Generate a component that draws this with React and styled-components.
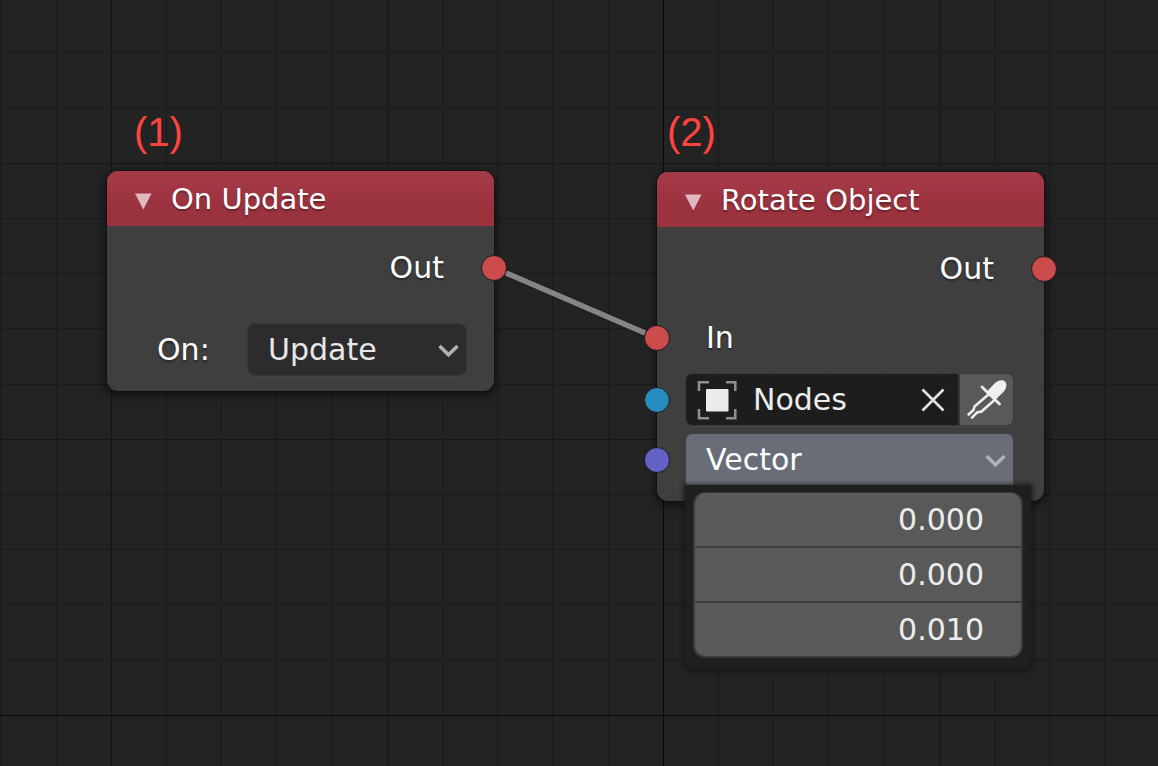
import React from "react";
import styled, { createGlobalStyle } from "styled-components";

const GlobalStyle = createGlobalStyle`
  *, *::before, *::after { box-sizing: border-box; }
  body {
    margin: 0;
    background: #232323;
    font-family: "DejaVu Sans", sans-serif;
  }
  button, input, select {
    margin: 0;
    padding: 0;
    border: 0;
    border-radius: 0;
    background: none;
    color: inherit;
    font: inherit;
    outline: none;
  }
`;

const gridStops = (major, minor) =>
  `${major} 0 1px, transparent 1px 55px, ${minor} 55px 56px, transparent 56px 110px, ${minor} 110px 111px, transparent 111px 165px, ${minor} 165px 166px, transparent 166px 221px, ${minor} 221px 222px, transparent 222px`;

const Canvas = styled.main`
  position: relative;
  min-height: 100vh;
  overflow: hidden;
  color: #ffffff;
  font-size: 30px;
  line-height: 36px;
  background-color: #232323;
  background-image:
    linear-gradient(90deg, #0a0a0a 1px, transparent 1px),
    linear-gradient(180deg, #0a0a0a 1px, transparent 1px),
    linear-gradient(90deg, ${gridStops("#151515", "#1a1a1a")}),
    linear-gradient(180deg, ${gridStops("#151515", "#1a1a1a")});
  background-size: 1380px 1380px, 1380px 1380px, 276px 276px, 276px 276px;
  background-position: 663px 715px, 663px 715px, 111px 163px, 111px 163px;
`;

const Annotation = styled.span`
  position: absolute;
  left: ${(p) => p.$x}px;
  top: ${(p) => p.$y}px;
  color: #ff4440;
  font-family: "Liberation Sans", sans-serif;
  font-size: 40px;
  line-height: 46px;
`;

const Links = styled.svg`
  position: absolute;
  inset: 0;
  width: 100%;
  height: 100%;
  pointer-events: none;
`;

const Node = styled.section`
  position: absolute;
  left: ${(p) => p.$x}px;
  top: ${(p) => p.$y}px;
  width: 387px;
  padding-bottom: 16px;
  border-radius: 11px;
  background: rgba(64, 64, 64, 0.97);
  box-shadow: 0 0 0 1px rgba(12, 12, 12, 0.5), 0 3px 9px 2px rgba(0, 0, 0, 0.5);
`;

const NodeHeader = styled.header`
  display: flex;
  align-items: center;
  gap: 19px;
  height: 55px;
  padding-left: 28px;
  border-radius: 11px 11px 0 0;
  background: linear-gradient(#a63b48, #9b333f 60%);
`;

const CollapseButton = styled.button`
  display: flex;
  margin-top: 6px;
`;

const NodeTitle = styled.h2`
  margin: 0;
  font-size: 29px;
  font-weight: 400;
  line-height: 36px;
  text-shadow: 0 2px 2px rgba(0, 0, 0, 0.35);
`;

const Row = styled.div`
  position: relative;
  display: flex;
  align-items: center;
  justify-content: ${(p) => (p.$end ? "flex-end" : "flex-start")};
  height: ${(p) => (p.$field ? 51 : 56)}px;
  margin-top: ${(p) => p.$gap}px;
  padding: ${(p) => (p.$field ? "0 31px 0 29px" : "0 50px 0 49px")};
`;

const SelectRow = styled(Row)`
  padding: 0 28px 0 50px;
  justify-content: space-between;
`;

const Label = styled.label`
  text-shadow: 0 2px 2px rgba(0, 0, 0, 0.4);
`;

const Socket = styled.span`
  position: absolute;
  top: 50%;
  ${(p) => p.$side}: 0;
  width: 26px;
  height: 26px;
  border: 1px solid #1b1b1b;
  border-radius: 50%;
  background: ${(p) => p.$color};
  transform: translate(${(p) => (p.$side === "left" ? "-50%" : "50%")}, -50%);
`;

const SelectBox = styled.div`
  position: relative;
  display: flex;
  align-items: center;
  width: 218px;
  height: 51px;
  border-radius: 7px;
  background: #2c2c2c;
  box-shadow: 0 0 0 1px #393939, 0 2px 0 #464646;
`;

const Select = styled.select`
  width: 100%;
  height: 100%;
  padding-left: 20px;
  appearance: none;
  color: #e8e8e8;
`;

const ChevronSvg = styled.svg`
  position: absolute;
  right: 7px;
  top: 20px;
  pointer-events: none;
`;

const ObjectField = styled.div`
  display: flex;
  flex: 1;
  height: 100%;
  gap: 2px;
  overflow: hidden;
  border-radius: 6px;
  background: #393939;
  box-shadow: 0 0 0 1px #393939, 0 2px 0 #464646;
`;

const ObjectName = styled.div`
  display: flex;
  flex: 1;
  min-width: 0;
  align-items: center;
  gap: 16px;
  padding: 0 13px 0 11px;
  background: #1d1d1d;
`;

const NameInput = styled.input`
  flex: 1;
  min-width: 0;
  color: #ececec;
`;

const IconButton = styled.button`
  display: flex;
`;

const PickButton = styled.button`
  display: flex;
  width: 53px;
  background: #595959;
`;

const VectorButton = styled.button`
  position: relative;
  flex: 1;
  height: 100%;
  padding-left: 20px;
  border-radius: 6px 6px 0 0;
  background: #696d77;
  text-align: left;
`;

const Popover = styled.div`
  position: absolute;
  top: 100%;
  left: 28px;
  right: 13px;
  padding: 8px 9px 12px;
  border-radius: 0 0 8px 8px;
  background: #1f1f1f;
  box-shadow: 0 1px 4px 2px rgba(20, 20, 20, 0.7);
`;

const ValueList = styled.div`
  display: grid;
  gap: 2px;
  overflow: hidden;
  border: 1px solid #3b3b3b;
  border-top: 0;
  border-radius: 11px;
  background: #3d3d3d;
  box-shadow: 0 0 0 1px #383838;
`;

const ValueInput = styled.input`
  width: 100%;
  height: 53px;
  padding-right: 37px;
  background: #595959;
  color: #ececec;
  text-align: right;
`;

function Chevron() {
  return (
    <ChevronSvg width="21" height="14" viewBox="0 0 21 14" fill="none" aria-hidden="true">
      <path d="M1.500 2l9 8.700L19.500 2" stroke="#b0b2b4" strokeWidth="3.600" />
    </ChevronSvg>
  );
}

function Collapse() {
  return (
    <CollapseButton aria-label="Collapse node">
      <svg width="17" height="17" viewBox="0 0 17 17" aria-hidden="true">
        <path d="M0 .5h16.500L8.300 16.500z" fill="#dfb9bf" />
      </svg>
    </CollapseButton>
  );
}

function ObjectIcon() {
  return (
    <svg width="40" height="40" viewBox="0 0 40 40" fill="none" aria-hidden="true">
      <path
        d="M2 11V2.200h10M29 2.200h9.300V11M38.300 29v9.200H29M12 38.200H2V29"
        stroke="#8e8e8e"
        strokeWidth="2.600"
      />
      <rect x="9" y="9" width="22.500" height="22.500" rx="1" fill="#ebebeb" />
    </svg>
  );
}

function ClearIcon() {
  return (
    <svg width="24" height="24" viewBox="0 0 24 24" fill="none" aria-hidden="true">
      <path d="M1.500 1.500l21 21M22.500 1.500l-21 21" stroke="#e4e4e4" strokeWidth="2.600" />
    </svg>
  );
}

function Eyedropper() {
  return (
    <svg width="53" height="51" viewBox="1 0 53 51" fill="none" aria-hidden="true">
      <path
        d="M29.500 20.500L15.500 32.500L14.500 36L8.800 41.300M35.500 26L22.500 37.500L18 38.500L12.300 44.300"
        stroke="#ececec"
        strokeWidth="2.600"
      />
      <path d="M23 13L40.500 30" stroke="#ececec" strokeWidth="2.800" strokeLinecap="round" />
      <path
        d="M27 18.500L35.500 9.500C38.300 6.300 43.500 5 46 7.500C48.500 10 47.300 15 44 18.500L35.500 26.500z"
        fill="#efefef"
      />
    </svg>
  );
}

export default function App() {
  return (
    <>
      <GlobalStyle />
      <Canvas>
        <Annotation $x={134} $y={109}>(1)</Annotation>
        <Annotation $x={667} $y={109}>(2)</Annotation>

        <Node $x={107} $y={171}>
          <NodeHeader>
            <Collapse />
            <NodeTitle>On Update</NodeTitle>
          </NodeHeader>
          <Row $end $gap={14}>
            <Label as="span">Out</Label>
            <Socket $side="right" $color="#cc4c4c" />
          </Row>
          <SelectRow $field $gap={28}>
            <Label htmlFor="event">On:</Label>
            <SelectBox>
              <Select id="event" defaultValue="Update">
                <option>Update</option>
              </Select>
              <Chevron />
            </SelectBox>
          </SelectRow>
        </Node>

        <Node $x={657} $y={172}>
          <NodeHeader>
            <Collapse />
            <NodeTitle>Rotate Object</NodeTitle>
          </NodeHeader>
          <Row $end $gap={14}>
            <Label as="span">Out</Label>
            <Socket $side="right" $color="#cc4c4c" />
          </Row>
          <Row $gap={13}>
            <Label as="span">In</Label>
            <Socket $side="left" $color="#cc4c4c" />
          </Row>
          <Row $field $gap={8}>
            <ObjectField>
              <ObjectName>
                <ObjectIcon />
                <NameInput aria-label="Object" defaultValue="Nodes" />
                <IconButton aria-label="Clear object">
                  <ClearIcon />
                </IconButton>
              </ObjectName>
              <PickButton aria-label="Pick object">
                <Eyedropper />
              </PickButton>
            </ObjectField>
            <Socket $side="left" $color="#268cc0" />
          </Row>
          <Row $field $gap={9}>
            <VectorButton aria-expanded="true">
              Vector
              <Chevron />
            </VectorButton>
            <Socket $side="left" $color="#6363c7" />
            <Popover>
              <ValueList>
                <ValueInput aria-label="X" defaultValue="0.000" />
                <ValueInput aria-label="Y" defaultValue="0.000" />
                <ValueInput aria-label="Z" defaultValue="0.010" />
              </ValueList>
            </Popover>
          </Row>
        </Node>

        <Links aria-hidden="true">
          <path d="M506 273L645 333" stroke="#1c1c1c" strokeOpacity="0.5" strokeWidth="8" />
          <path d="M506 273L645 333" stroke="#858585" strokeWidth="5.500" />
        </Links>
      </Canvas>
    </>
  );
}
